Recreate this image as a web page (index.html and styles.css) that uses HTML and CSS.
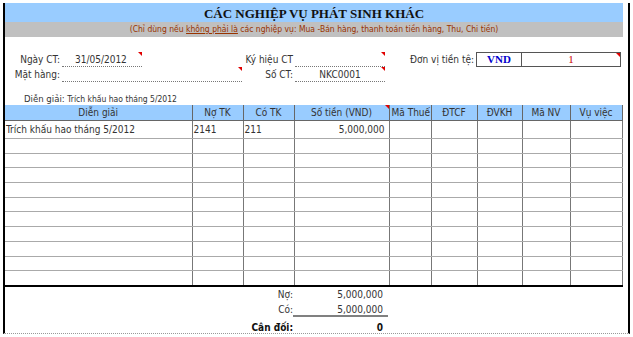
FILE: index.html
```html
<!DOCTYPE html>
<html lang="vi">
<head>
    <meta charset="UTF-8">
    <meta name="viewport" content="width=device-width, initial-scale=1.0">
    <title>Các nghiệp vụ phát sinh khác</title>
    <link rel="stylesheet" href="styles.css">
</head>
<body>
    <div class="sheet">
        <div class="title">CÁC NGHIỆP VỤ PHÁT SINH KHÁC</div>
        <div class="note">(Chỉ dùng nếu <u>không phải là</u> các nghiệp vụ: Mua -Bán hàng, thanh toán tiền hàng, Thu, Chi tiền)</div>

        <div class="form">
            <div class="form-row">
                <div class="label w57">Ngày CT:</div>
                <div class="field w80 mark"><span class="date">31/05/2012</span></div>
                <div class="label w153">Ký hiệu CT</div>
                <div class="field w90 mark"></div>
                <div class="label w91">Đơn vị tiền tệ:</div>
                <div class="currency mark">
                    <div class="cur-code">VND</div>
                    <div class="cur-rate">1</div>
                </div>
            </div>
            <div class="form-row">
                <div class="label w57">Mặt hàng:</div>
                <div class="field w180 mark"></div>
                <div class="label w53">Số CT:</div>
                <div class="field w90 mark center">NKC0001</div>
            </div>
        </div>

        <div class="memo">Diễn giải: <span>Trích khấu hao tháng 5/2012</span></div>

        <table class="entries">
            <colgroup>
                <col style="width:187px">
                <col style="width:51px">
                <col style="width:51px">
                <col style="width:95px">
                <col style="width:42px">
                <col style="width:46px">
                <col style="width:45px">
                <col style="width:48px">
                <col style="width:52px">
            </colgroup>
            <thead>
                <tr>
                    <th>Diễn giải</th>
                    <th>Nợ TK</th>
                    <th>Có TK</th>
                    <th class="mark">Số tiền (VND)</th>
                    <th class="left">Mã Thuế</th>
                    <th>ĐTCF</th>
                    <th>ĐVKH</th>
                    <th>Mã NV</th>
                    <th>Vụ việc</th>
                </tr>
            </thead>
            <tbody>
                <tr class="first">
                    <td>Trích khấu hao tháng 5/2012</td>
                    <td>2141</td>
                    <td>211</td>
                    <td class="num">5,000,000</td>
                    <td></td><td></td><td></td><td></td><td></td>
                </tr>
                <tr><td></td><td></td><td></td><td></td><td></td><td></td><td></td><td></td><td></td></tr>
                <tr><td></td><td></td><td></td><td></td><td></td><td></td><td></td><td></td><td></td></tr>
                <tr><td></td><td></td><td></td><td></td><td></td><td></td><td></td><td></td><td></td></tr>
                <tr><td></td><td></td><td></td><td></td><td></td><td></td><td></td><td></td><td></td></tr>
                <tr><td></td><td></td><td></td><td></td><td></td><td></td><td></td><td></td><td></td></tr>
                <tr><td></td><td></td><td></td><td></td><td></td><td></td><td></td><td></td><td></td></tr>
                <tr><td></td><td></td><td></td><td></td><td></td><td></td><td></td><td></td><td></td></tr>
                <tr><td></td><td></td><td></td><td></td><td></td><td></td><td></td><td></td><td></td></tr>
                <tr><td></td><td></td><td></td><td></td><td></td><td></td><td></td><td></td><td></td></tr>
                <tr><td></td><td></td><td></td><td></td><td></td><td></td><td></td><td></td><td></td></tr>
            </tbody>
        </table>

        <div class="totals">
            <div class="total-row">
                <div class="total-label">Nợ:</div>
                <div class="total-value">5,000,000</div>
            </div>
            <div class="total-row">
                <div class="total-label">Có:</div>
                <div class="total-value underline">5,000,000</div>
            </div>
            <div class="total-row balance">
                <div class="total-label">Cân đối:</div>
                <div class="total-value">0</div>
            </div>
        </div>
    </div>
</body>
</html>
```

FILE: styles.css
```css
body {
    margin: 0;
    font-family: "DejaVu Sans Condensed", "Liberation Sans", sans-serif;
    font-size: 10px;
    color: #333;
    background: #fff;
}

.sheet {
    margin: 3px 0 0 3px;
    width: 618px;
    height: 330px;
    padding-right: 5px;
    border-left: 2px solid #000;
    border-right: 2px solid #000;
    border-bottom: 1px dotted #999;
    overflow: hidden;
}

.title {
    height: 19px;
    line-height: 21px;
    text-align: center;
    background-color: #99ccff;
    font-family: "Liberation Serif", serif;
    font-weight: bold;
    font-size: 13px;
    color: #111;
}

.note {
    height: 15px;
    line-height: 14px;
    text-align: center;
    background-color: #c0c0c0;
    font-size: 8.5px;
    color: #993300;
}

.form {
    margin-top: 15px;
}

.form-row {
    display: flex;
    height: 15px;
    line-height: 15px;
}

.label {
    text-align: right;
    padding-right: 2px;
    box-sizing: border-box;
}

.field {
    position: relative;
    box-sizing: border-box;
    border-bottom: 1px dotted #777;
}

.center {
    text-align: center;
}

.date {
    padding-left: 13px;
}

.w53 { width: 53px; }
.w57 { width: 57px; }
.w80 { width: 80px; }
.w90 { width: 90px; }
.w91 { width: 91px; }
.w153 { width: 153px; }
.w180 { width: 180px; }

.currency {
    position: relative;
    display: flex;
    width: 145px;
    height: 15px;
    box-sizing: border-box;
    border: 1px solid #555;
    font-family: "Liberation Serif", serif;
    font-size: 11px;
    line-height: 13px;
}

.cur-code {
    width: 44px;
    border-right: 1px solid #555;
    text-align: center;
    font-weight: bold;
    color: #0000cc;
}

.cur-rate {
    flex: 1;
    text-align: center;
    color: #cc0000;
}

/* comment marker */
.mark::after {
    content: "";
    position: absolute;
    top: 0;
    right: 0;
    border-top: 4px solid #e00000;
    border-left: 4px solid transparent;
}

.memo {
    margin-top: 10px;
    height: 13px;
    line-height: 13px;
    padding-left: 19px;
    font-size: 9.5px;
}

.memo span {
    font-size: 8.5px;
}

.entries {
    border-collapse: collapse;
    table-layout: fixed;
    width: 617px;
}

.entries th {
    position: relative;
    height: 14px;
    padding: 0;
    background-color: #99ccff;
    font-weight: normal;
    text-align: center;
    border: 1px solid #666;
    border-top: none;
    line-height: 15px;
    white-space: nowrap;
    overflow: hidden;
}

.entries th:first-child,
.entries td:first-child {
    border-left: none;
}

.entries th.left {
    text-align: left;
    padding-left: 2px;
}

.entries td {
    height: 13.7px;
    padding: 0 1px;
    border-left: 1px solid #777;
    border-right: 1px solid #777;
    border-bottom: 1px solid #aaa;
    line-height: 13px;
    white-space: nowrap;
    overflow: hidden;
}

.entries tr.first td {
    height: 17px;
}

.entries tbody tr:last-child td {
    border-bottom: 2px solid #000;
}

.entries td.num {
    text-align: right;
    padding-right: 4px;
}

.total-row {
    display: flex;
    height: 15px;
    line-height: 15px;
}

.total-label {
    width: 288px;
    text-align: right;
}

.total-value {
    width: 95px;
    text-align: right;
    padding-right: 5px;
    box-sizing: border-box;
}

.underline {
    border-bottom: 2px solid #808080;
}

.balance {
    margin-top: 3px;
    font-weight: bold;
    color: #111;
}
```
